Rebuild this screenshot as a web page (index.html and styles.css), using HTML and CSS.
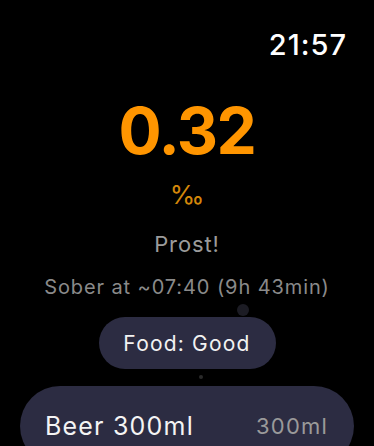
FILE: index.html
```html
<!DOCTYPE html>
<html>
<head>
<meta charset="utf-8">
<link rel="stylesheet" href="styles.css">
</head>
<body>
<div class="screen">
  <div class="status"><span class="time">21:57</span></div>
  <div class="content">
    <div class="bac">0.32</div>
    <div class="unit">‰</div>
    <div class="msg">Prost!</div>
    <div class="sober">Sober at ~07:40 (9h 43min)</div>
    <div class="pill">Food: Good</div>
    <div class="row"><span class="row-name">Beer 300ml</span><span class="row-vol">300ml</span></div>
  </div>
  <span class="dot dot-a"></span>
  <span class="dot dot-b"></span>
</div>
</body>
</html>
```
FILE: styles.css
```css
html, body {
  margin: 0;
  padding: 0;
  background: #000;
}
.screen {
  position: relative;
  width: 374px;
  height: 446px;
  overflow: hidden;
  background: #000;
  font-family: Inter, "Noto Sans", sans-serif;
  color: #fff;
}
.status {
  display: flex;
  justify-content: flex-end;
  padding: 30px 27px 0 0;
}
.time {
  font-size: 29px;
  line-height: 29px;
  font-weight: 500;
  letter-spacing: 1px;
}
.content {
  display: flex;
  flex-direction: column;
  align-items: center;
}
.bac {
  margin-top: 40px;
  font-size: 64px;
  line-height: 64px;
  font-weight: 700;
  color: #ff9500;
  letter-spacing: -1.5px;
}
.unit {
  margin-top: 19px;
  font-size: 26px;
  line-height: 26px;
  color: #d4870a;
}
.msg {
  margin-top: 25px;
  font-size: 22px;
  line-height: 22px;
  color: #9b9b9b;
  letter-spacing: 0.9px;
}
.sober {
  margin-top: 22px;
  font-size: 20px;
  line-height: 20px;
  color: #8a8a8a;
  letter-spacing: 0.9px;
}
.pill {
  margin-top: 20px;
  width: 177px;
  height: 52px;
  border-radius: 26px;
  background: #2c2c42;
  display: flex;
  align-items: center;
  justify-content: center;
  font-size: 21px;
  letter-spacing: 1.2px;
  color: #f2f2f2;
}
.row {
  margin-top: 17px;
  width: 334px;
  height: 80px;
  border-radius: 40px;
  background: #2c2c42;
  display: flex;
  align-items: flex-start;
  justify-content: space-between;
  box-sizing: border-box;
  padding: 25px 26px 0 25px;
}
.row-name {
  font-size: 25px;
  line-height: 30px;
  color: #f4f4f4;
  letter-spacing: 1.2px;
}
.row-vol {
  font-size: 22px;
  line-height: 30px;
  color: #9a9a9a;
  letter-spacing: 1.2px;
}
.dot {
  position: absolute;
  border-radius: 50%;
}
.dot-a {
  left: 237px;
  top: 304px;
  width: 12px;
  height: 12px;
  background: #1c1c24;
}
.dot-b {
  left: 199px;
  top: 375px;
  width: 4px;
  height: 4px;
  background: #2a2a2a;
}
```
